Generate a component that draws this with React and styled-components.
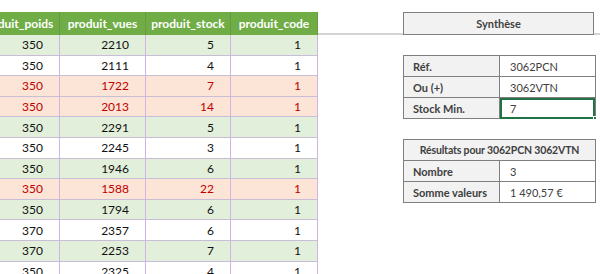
import React from 'react';
import styled, { createGlobalStyle, css } from 'styled-components';

const GlobalStyle = createGlobalStyle`
  html, body {
    margin: 0;
    padding: 0;
    background: #fff;
  }
  body {
    font-family: Lato, "Liberation Sans", sans-serif;
    font-size: 11px;
    color: #111;
  }
`

const Sheet = styled.div`
  display: flex;
  width: 600px;
  height: 274px;
  overflow: hidden;
`

const TableClip = styled.div`
  width: 318px;
  flex: none;
  overflow: hidden;
  padding-top: 12px;
  font-size: 12px;
`

const Table = styled.div`
  margin-left: -26px;
  width: 344px;
`

const Row = styled.div`
  display: grid;
  grid-template-columns: 86px 86px 85px 87px;
  height: 20.6px;
  box-sizing: border-box;
  border-bottom: 1px solid #c9bdd8;
  background: #fff;
  color: #111;
  ${props => props.tone === 'green' && css`
    background: #e2efda;
  `}
  ${props => props.tone === 'red' && css`
    background: #fce4d6;
    color: #c00000;
  `}
`

const HeaderRow = styled(Row)`
  height: 23px;
  background: #70ad47;
  color: #fff;
  font-weight: 700;
  border-bottom: none;
`

const Cell = styled.div`
  display: flex;
  align-items: center;
  justify-content: flex-end;
  padding-right: 16px;
  border-right: 1px solid #cdb3e6;
  ${props => props.head && css`
    justify-content: center;
    padding-right: 0;
    border-right-color: #649c3e;
  `}
`

const Panel = styled.div`
  flex: 1;
  display: flex;
  flex-direction: column;
  color: #404040;
`

const TopStrip = styled.div`
  height: 35px;
  padding-top: 12px;
  box-sizing: border-box;
  background: linear-gradient(to bottom, transparent 33px, #d4d4d4 33px, #d4d4d4 35px);
`

const TitleBox = styled.div`
  margin-left: 85px;
  width: 191px;
  height: 23px;
  box-sizing: border-box;
  border: 1px solid #7f7f7f;
  background: #f2f2f2;
  display: flex;
  align-items: center;
  justify-content: center;
  font-weight: 700;
`

const InfoTable = styled.div`
  margin-left: 85px;
  margin-top: ${props => props.gap}px;
  width: 191px;
  border: 1px solid #7f7f7f;
  border-bottom: none;
  display: grid;
  grid-template-columns: 96px 95px;
`

const InfoHead = styled.div`
  grid-column: 1 / -1;
  height: 21px;
  box-sizing: border-box;
  border-bottom: 1px solid #7f7f7f;
  background: #f2f2f2;
  display: flex;
  align-items: center;
  justify-content: center;
  font-weight: 700;
  font-size: 10.5px;
  letter-spacing: -0.15px;
`

const Label = styled.div`
  height: 21px;
  box-sizing: border-box;
  border-bottom: 1px solid #7f7f7f;
  border-right: 1px solid #7f7f7f;
  background: #f2f2f2;
  display: flex;
  align-items: center;
  padding-left: 9px;
  font-weight: 700;
`

const Value = styled.div`
  position: relative;
  height: 21px;
  box-sizing: border-box;
  border-bottom: 1px solid #7f7f7f;
  background: #fff;
  display: flex;
  align-items: center;
  padding-left: 10px;
  ${props => props.selected && css`
    outline: 2px solid #217346;
    outline-offset: -2px;
  `}
`

const FillHandle = styled.span`
  position: absolute;
  right: -2px;
  bottom: -2px;
  width: 4px;
  height: 4px;
  background: #217346;
  border: 1px solid #fff;
  box-sizing: border-box;
`

const rows = [
  ['green', 350, 2210, 5, 1],
  ['white', 350, 2111, 4, 1],
  ['red', 350, 1722, 7, 1],
  ['red', 350, 2013, 14, 1],
  ['green', 350, 2291, 5, 1],
  ['white', 350, 2245, 3, 1],
  ['green', 350, 1946, 6, 1],
  ['red', 350, 1588, 22, 1],
  ['green', 350, 1794, 6, 1],
  ['white', 370, 2357, 6, 1],
  ['green', 370, 2253, 7, 1],
  ['white', 350, 2325, 4, 1],
];

const headers = ['produit_poids', 'produit_vues', 'produit_stock', 'produit_code'];

export default function App() {
  return (
    <>
      <GlobalStyle />
      <Sheet>
        <TableClip>
          <Table>
            <HeaderRow>
              {headers.map(h => <Cell head key={h}>{h}</Cell>)}
            </HeaderRow>
            {rows.map(([tone, ...vals], i) => (
              <Row tone={tone} key={i}>
                {vals.map((v, j) => <Cell key={j}>{v}</Cell>)}
              </Row>
            ))}
          </Table>
        </TableClip>
        <Panel>
          <TopStrip>
            <TitleBox>Synthèse</TitleBox>
          </TopStrip>
          <InfoTable gap={20}>
            <Label>Réf.</Label>
            <Value>3062PCN</Value>
            <Label>Ou (+)</Label>
            <Value>3062VTN</Value>
            <Label>Stock Min.</Label>
            <Value selected>7<FillHandle /></Value>
          </InfoTable>
          <InfoTable gap={20}>
            <InfoHead>Résultats pour 3062PCN 3062VTN</InfoHead>
            <Label>Nombre</Label>
            <Value>3</Value>
            <Label>Somme valeurs</Label>
            <Value>1 490,57 €</Value>
          </InfoTable>
        </Panel>
      </Sheet>
    </>
  );
}
